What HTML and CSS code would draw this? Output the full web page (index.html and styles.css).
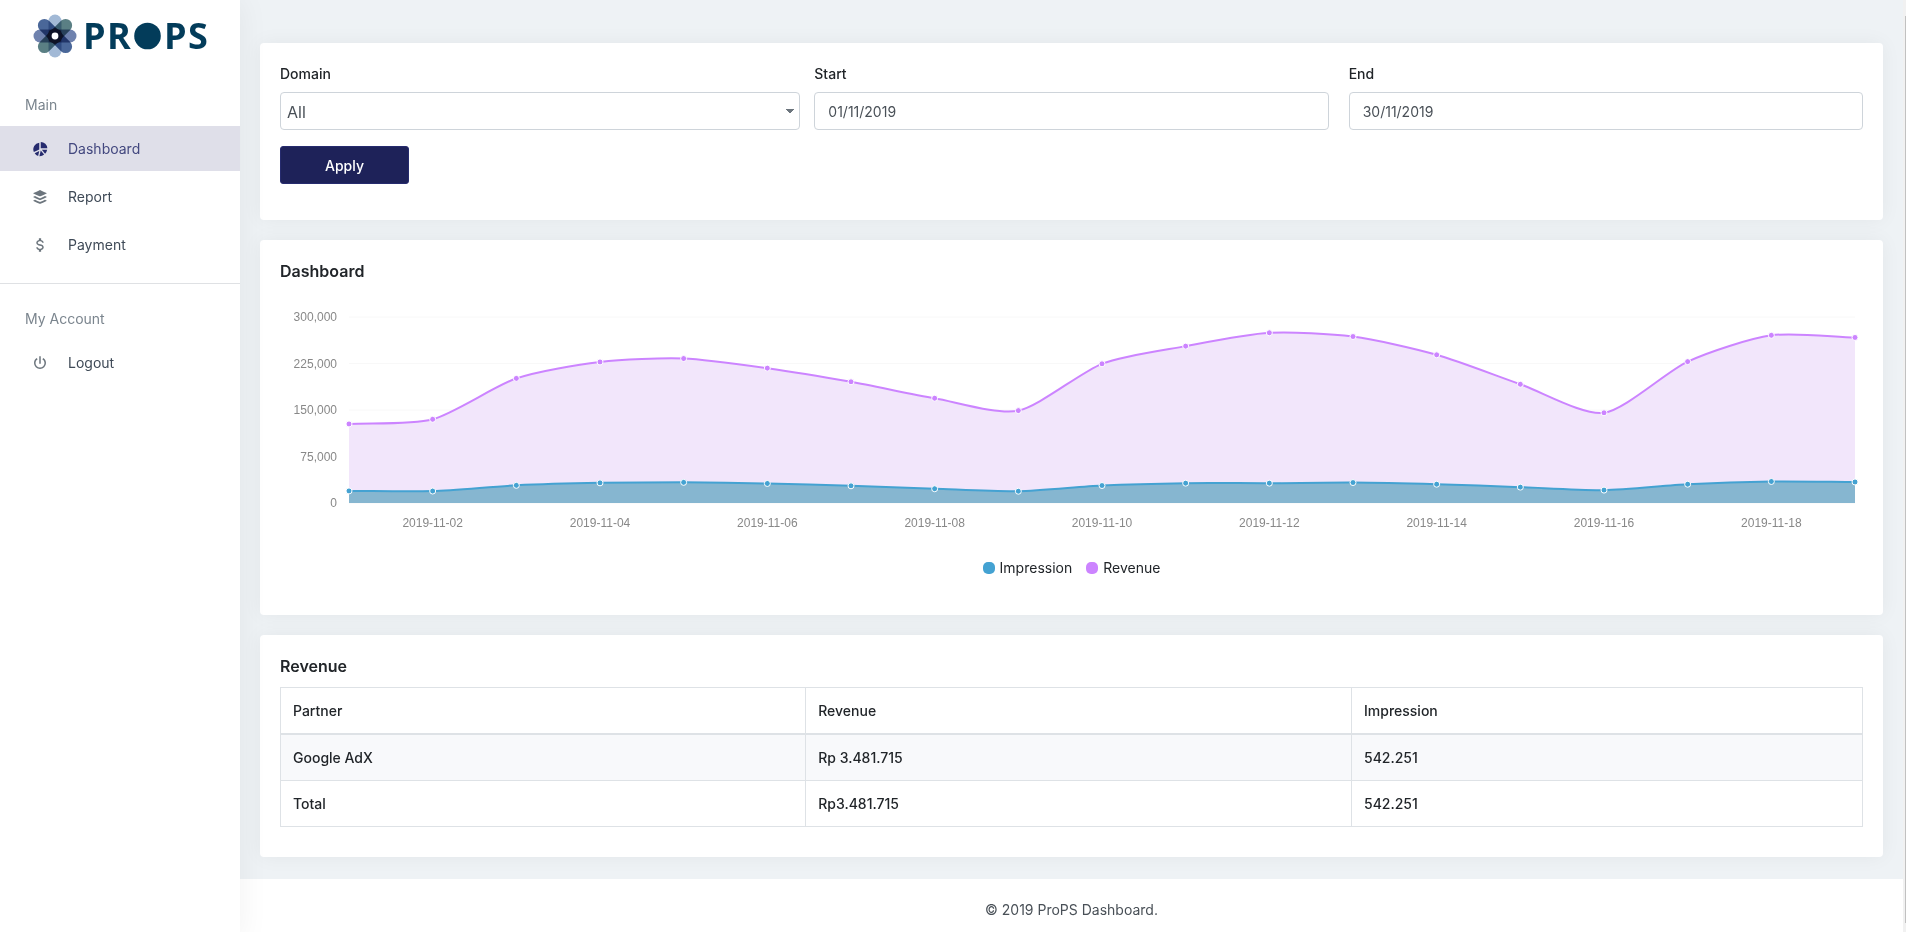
FILE: index.html
```html
<!DOCTYPE html>
<html lang="en">
<head>
<meta charset="utf-8">
<title>ProPS Dashboard</title>
<link rel="stylesheet" href="styles.css">
</head>
<body>
<div class="app">
  <aside class="sidebar">
    <a class="brand" href="#" aria-label="PROPS">
      <svg class="brand-logo" width="180" height="60" viewBox="0 -8 180 60">
        <g class="flower" transform="translate(22 22)">
          <rect x="-6.5" y="-21.5" width="13" height="43" rx="6.5" fill="#a2b9d6"/>
          <rect x="-6.5" y="-21.5" width="13" height="43" rx="6.5" fill="#6f82ae" transform="rotate(90)"/>
          <rect x="-6.5" y="-21.5" width="13" height="43" rx="6.5" fill="#4a6799" transform="rotate(-45)"/>
          <rect x="-6.5" y="-21.5" width="13" height="43" rx="6.5" fill="#5a7f84" transform="rotate(45)"/>
        </g>
        <path d="M22 14l5.500 2.500 2.500 5.500-2.500 5.500-5.500 2.500-5.500-2.500-2.500-5.500 2.500-5.500z" fill="#0e1226"/>
        <circle cx="22" cy="22" r="3.400" fill="#fff"/>
        <text class="brand-text" x="50" y="35">P</text>
        <text class="brand-text" x="74" y="35">R</text>
        <circle cx="114.500" cy="22" r="13.300" fill="#033c5a"/>
        <text class="brand-text" x="131" y="35">P</text>
        <text class="brand-text" x="155" y="35">S</text>
      </svg>
    </a>
    <nav class="nav">
      <h2 class="nav-title">Main</h2>
      <a class="nav-item active" href="#">
        <svg class="icon" viewBox="0 0 24 24"><path d="M13 2.500a9 9 0 0 1 8.800 8.500H13zM11 3.500v9L3.800 16A9 9 0 0 1 11 3.500zM4.900 17.500L11 14.500l-1.500 6.700a9 9 0 0 1-4.600-3.700zM11.200 21.500L13 14l4.500 5.400a9 9 0 0 1-6.300 2.100zM14.500 13h7a9 9 0 0 1-2.700 5.200z"/></svg>
        <span>Dashboard</span>
      </a>
      <a class="nav-item" href="#">
        <svg class="icon" viewBox="0 0 24 24"><path d="M12.600 2.860C15.270 4.100 18 5.390 20.660 6.630C20.810 6.700 21 6.750 21 6.950C21 7.150 20.810 7.190 20.660 7.260C18 8.500 15.300 9.770 12.620 11C12.210 11.210 11.790 11.210 11.380 11C8.690 9.760 6 8.500 3.320 7.250C3.180 7.190 3 7.140 3 6.940C3 6.760 3.180 6.710 3.310 6.650C6 5.390 8.740 4.100 11.440 2.850C11.730 2.720 12.300 2.730 12.600 2.860M12 21.150C11.800 21.150 11.660 21.110 11.380 20.970C8.690 19.730 6 18.470 3.330 17.220C3.190 17.150 3 17.110 3 16.900C3 16.700 3.190 16.660 3.340 16.590C3.780 16.380 4.230 16.170 4.670 15.960C5.120 15.760 5.560 15.760 6 15.970C7.790 16.800 9.570 17.630 11.350 18.460C11.790 18.670 12.230 18.660 12.670 18.460C14.450 17.620 16.230 16.790 18 15.960C18.440 15.760 18.870 15.750 19.290 15.950C19.770 16.160 20.240 16.390 20.710 16.610C20.780 16.640 20.850 16.680 20.910 16.730C21.040 16.830 21.040 17 20.910 17.080C20.830 17.140 20.740 17.190 20.650 17.230C18 18.500 15.330 19.720 12.660 20.950C12.460 21.050 12.190 21.150 12 21.150M12 16.170C11.900 16.170 11.550 16.070 11.360 16C8.680 14.740 6 13.500 3.340 12.240C3.200 12.180 3 12.130 3 11.930C3 11.720 3.200 11.680 3.350 11.610C3.800 11.390 4.250 11.180 4.700 10.970C5.130 10.780 5.560 10.780 6 11C7.780 11.820 9.580 12.660 11.380 13.500C11.790 13.690 12.210 13.690 12.630 13.500C14.430 12.650 16.230 11.810 18.040 10.970C18.450 10.780 18.870 10.780 19.290 10.970C19.760 11.190 20.240 11.410 20.710 11.630C20.770 11.660 20.840 11.690 20.900 11.740C21.040 11.850 21.040 12 20.890 12.120C20.840 12.160 20.770 12.190 20.710 12.220C18 13.500 15.310 14.750 12.610 16C12.420 16.090 12.080 16.170 12 16.170Z"/></svg>
        <span>Report</span>
      </a>
      <a class="nav-item" href="#">
        <svg class="icon" viewBox="0 0 24 24"><path d="M7 15H9C9 16.080 10.370 17 12 17C13.630 17 15 16.080 15 15C15 13.900 13.960 13.500 11.760 12.970C9.640 12.440 7 11.780 7 9C7 7.210 8.470 5.690 10.500 5.180V3H13.500V5.180C15.530 5.690 17 7.210 17 9H15C15 7.920 13.630 7 12 7C10.370 7 9 7.920 9 9C9 10.100 10.040 10.500 12.240 11.030C14.360 11.560 17 12.220 17 15C17 16.790 15.530 18.310 13.500 18.820V21H10.500V18.820C8.470 18.310 7 16.790 7 15Z"/></svg>
        <span>Payment</span>
      </a>
      <hr class="nav-divider">
      <h2 class="nav-title">My Account</h2>
      <a class="nav-item" href="#">
        <svg class="icon" viewBox="0 0 24 24"><path d="M16.560 5.440L15.110 6.890C16.840 7.940 18 9.830 18 12A6 6 0 0 1 12 18A6 6 0 0 1 6 12C6 9.830 7.160 7.940 8.880 6.880L7.440 5.440C5.360 6.880 4 9.280 4 12A8 8 0 0 0 12 20A8 8 0 0 0 20 12C20 9.280 18.640 6.880 16.560 5.440M13 3H11V13H13"/></svg>
        <span>Logout</span>
      </a>
    </nav>
  </aside>

  <div class="page">
    <main class="content">
      <form class="card filter">
        <div class="fields">
          <div class="field">
            <label for="domain">Domain</label>
            <select id="domain" class="control select"><option>All</option></select>
          </div>
          <div class="field">
            <label for="start">Start</label>
            <input id="start" class="control" type="text" value="01/11/2019">
          </div>
          <div class="field">
            <label for="end">End</label>
            <input id="end" class="control" type="text" value="30/11/2019">
          </div>
        </div>
        <button class="button" type="button">Apply</button>
      </form>

      <section class="card">
        <h1 class="card-title">Dashboard</h1>
        <svg id="chart" class="chart" role="img" aria-label="Impression and revenue by day"></svg>
        <ul class="legend">
          <li><span class="dot impression"></span>Impression</li>
          <li><span class="dot revenue"></span>Revenue</li>
        </ul>
      </section>

      <section class="card">
        <h1 class="card-title">Revenue</h1>
        <table class="table">
          <colgroup><col class="col-partner"><col class="col-revenue"><col class="col-impression"></colgroup>
          <thead><tr><th>Partner</th><th>Revenue</th><th>Impression</th></tr></thead>
          <tbody>
            <tr><td>Google AdX</td><td>Rp 3.481.715</td><td>542.251</td></tr>
            <tr><td>Total</td><td>Rp3.481.715</td><td>542.251</td></tr>
          </tbody>
        </table>
      </section>
    </main>
    <footer class="footer">© 2019 ProPS Dashboard.</footer>
  </div>
  <div class="scroll-track"><div class="scroll-thumb"></div></div>
</div>
<script src="chart.js"></script>
</body>
</html>
```
FILE: styles.css
```css
* {
  box-sizing: border-box;
}

body {
  margin: 0;
  background: #eef2f5;
  color: #212529;
  font: 14px/21px Inter, "Liberation Sans", sans-serif;
}

.app {
  display: flex;
  min-height: 100vh;
}

/* Sidebar */
.sidebar {
  flex: none;
  width: 240px;
  background: #fff;
  box-shadow: 0 0 30px rgba(0, 0, 0, 0.06);
  z-index: 1;
}

.brand {
  display: block;
  padding: 6px 33px;
  height: 72px;
}

.brand-logo {
  display: block;
}

.flower {
  isolation: isolate;
}

.flower rect {
  mix-blend-mode: multiply;
}

.brand-text {
  font: bold 36px "Open Sans", sans-serif;
  fill: #033c5a;
}

.nav-title {
  margin: 0;
  padding: 22px 25px 11px;
  font-size: 14px;
  font-weight: 400;
  color: #7b858e;
}

.nav-item {
  display: flex;
  align-items: center;
  gap: 19px;
  height: 45px;
  margin-bottom: 3px;
  padding: 0 31px;
  color: #3f4a57;
  text-decoration: none;
}

.nav-item.active {
  background: #dfdfe9;
  color: #43487f;
}

.icon {
  width: 18px;
  height: 18px;
  fill: #6c757d;
}

.active .icon {
  fill: #262b6e;
}

.nav-divider {
  margin: 16px 0 2px;
  border: 0;
  border-top: 1px solid #dfe1e4;
}

/* Content */
.page {
  flex: 1;
  display: flex;
  flex-direction: column;
  min-width: 0;
}

.content {
  display: flex;
  flex-direction: column;
  gap: 20px;
  padding: 43px 20px 22px;
}

.card {
  padding: 20px;
  background: #fff;
  border-radius: 4px;
  box-shadow: 0 0 20px rgba(0, 0, 0, 0.05);
}

.filter {
  padding-bottom: 36px;
}

.fields {
  display: grid;
  grid-template-columns: repeat(3, minmax(0, 1fr));
  gap: 20px;
}

.field {
  display: flex;
  flex-direction: column;
  gap: 8px;
}

.field label {
  font-weight: 500;
}

.control {
  height: 38px;
  padding: 0 13px;
  border: 1px solid #ced4da;
  border-radius: 4px;
  background: #fff;
  color: #495057;
  font: inherit;
}

.select {
  width: calc(100% + 6px);
  padding: 2px 6px 0;
  appearance: none;
  background-image:
    linear-gradient(to bottom right, #6c757d 50%, transparent 51%),
    linear-gradient(to bottom left, #6c757d 50%, transparent 51%);
  background-position: right 5px top 16px, right 9px top 16px;
  background-size: 4px 4px;
  background-repeat: no-repeat;
  font-size: 16px;
}

.button {
  display: block;
  width: 129px;
  height: 38px;
  margin-top: 16px;
  border: 1px solid #262b6e;
  border-radius: 3px;
  background: #1e2259;
  color: #fff;
  font: inherit;
  font-weight: 500;
}

.card-title {
  margin: 0;
  font-size: 16px;
  line-height: 22px;
  font-weight: 600;
}

/* Chart */
.chart {
  display: block;
  width: 100%;
  height: 250px;
}

.chart text {
  font: 12px "Liberation Sans", sans-serif;
  fill: #888;
}

.grid-line {
  stroke: #f8f8f8;
}

.area-impression { fill: #86b6d0; }
.area-revenue { fill: #f2e6fb; }
.line { fill: none; stroke-width: 2; }
.line-impression { stroke: #44a2d2; }
.line-revenue { stroke: #cc84ff; }
.point { stroke: #fff; }
.point-impression { fill: #44a2d2; }
.point-revenue { fill: #cc84ff; }

.legend {
  display: flex;
  justify-content: center;
  gap: 14px;
  margin: 0;
  padding: 25px 0 17px;
  list-style: none;
}

.legend li {
  display: flex;
  align-items: center;
  gap: 5px;
}

.dot {
  width: 12px;
  height: 12px;
  border-radius: 5px;
}

.dot.impression { background: #44a2d2; }
.dot.revenue { background: #cc84ff; }

/* Table */
.table {
  width: 100%;
  margin: 10px 0;
  border-collapse: collapse;
  table-layout: fixed;
  font-weight: 500;
}

.col-partner { width: 33.2%; }
.col-revenue { width: 34.5%; }
.col-impression { width: 32.3%; }

.table th,
.table td {
  height: 46px;
  padding: 12px;
  border: 1px solid #dee2e6;
  font-weight: 500;
  text-align: left;
}

.table th {
  border-bottom-width: 2px;
}

.table tbody tr:nth-child(odd) {
  background: #f8f9fb;
}

.footer {
  flex: 1;
  padding: 20px;
  background: #fff;
  color: #495057;
  text-align: center;
}

.scroll-track {
  flex: none;
  width: 3px;
  padding: 16px 0 17px 2px;
  background: #f1f1f1;
}

.scroll-thumb {
  height: 100%;
  background: #c1c1c1;
}
```
FILE: chart.js
```js
(function () {
  var MAX = 300000;
  var revenue = [127500, 135000, 201000, 227500, 233000, 217500, 195500, 169000, 149000, 224500, 253000, 274500, 268500, 239000, 191500, 145500, 228000, 270500, 267000];
  var impression = [19500, 19300, 28500, 32500, 33300, 31500, 27700, 23000, 19000, 28200, 32000, 32000, 33000, 30300, 25600, 20800, 30300, 34700, 33900];
  var plot = { left: 69, right: 8, top: 35, height: 186 };
  var svg = document.getElementById('chart');

  function add(tag, attrs, text) {
    var el = document.createElementNS('http://www.w3.org/2000/svg', tag);
    Object.keys(attrs).forEach(function (k) { el.setAttribute(k, attrs[k]); });
    if (text) el.textContent = text;
    svg.appendChild(el);
  }

  function slope(a, b) {
    return (b.y - a.y) / (b.x - a.x);
  }

  function smooth(pts) {
    var last = pts.length - 1;
    var g = pts.map(function (p, i) {
      return slope(pts[Math.max(0, i - 1)], pts[Math.min(last, i + 1)]);
    });
    var d = 'M' + pts[0].x + ' ' + pts[0].y;
    for (var i = 1; i <= last; i++) {
      var a = pts[i - 1], b = pts[i], q = (b.x - a.x) / 4;
      d += 'C' + [a.x + q, a.y + q * g[i - 1], b.x - q, b.y - q * g[i], b.x, b.y].join(' ');
    }
    return d;
  }

  function draw() {
    var width = svg.clientWidth;
    var right = width - plot.right;
    var bottom = plot.top + plot.height;
    svg.innerHTML = '';

    for (var v = 0; v <= MAX; v += 75000) {
      var y = bottom - v / MAX * plot.height;
      add('line', { class: 'grid-line', x1: plot.left, x2: right, y1: y, y2: y });
      add('text', { x: plot.left - 12, y: y + 4, 'text-anchor': 'end' }, v.toLocaleString('en-US'));
    }

    [['revenue', revenue], ['impression', impression]].forEach(function (s) {
      var pts = s[1].map(function (value, i) {
        return {
          x: plot.left + i * (right - plot.left) / (s[1].length - 1),
          y: bottom - value / MAX * plot.height
        };
      });
      var d = smooth(pts);
      add('path', { class: 'area-' + s[0], d: d + 'V' + bottom + 'H' + plot.left + 'Z' });
      add('path', { class: 'line line-' + s[0], d: d });
      pts.forEach(function (p, i) {
        add('circle', { class: 'point point-' + s[0], cx: p.x, cy: p.y, r: 3 });
        if (s[0] === 'revenue' && i % 2 === 1) {
          add('text', { x: p.x, y: bottom + 24, 'text-anchor': 'middle' }, '2019-11-' + String(i + 1).padStart(2, '0'));
        }
      });
    });
  }

  draw();
  window.addEventListener('resize', draw);
})();
```
